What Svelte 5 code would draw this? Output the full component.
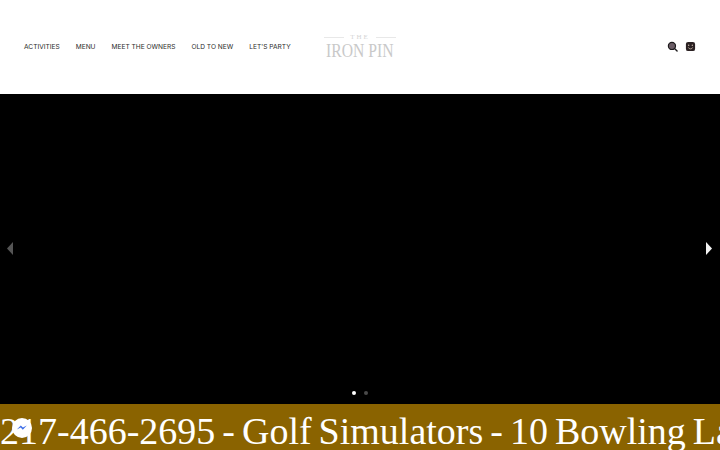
<script>
	const NAV = ['ACTIVITIES', 'MENU', 'MEET THE OWNERS', 'OLD TO NEW', "LET'S PARTY"];
</script>

<div class="page">
	<header class="head">
		<nav class="nav">
			{#each NAV as item}
				<span class="nav-link">{item}</span>
			{/each}
		</nav>

		<div class="logo">
			<div class="logo-top"><i></i><span>THE</span><i></i></div>
			<div class="logo-name">IRON PIN</div>
		</div>

		<div class="tools">
			<svg class="ico" viewBox="0 0 12 12" aria-hidden="true">
				<circle cx="5.4" cy="5.4" r="3.9" fill="#6b5d66" stroke="#1d1a1c" stroke-width="1.3"/>
				<path d="M8.2 8.2 11 11" stroke="#1d1a1c" stroke-width="1.5" stroke-linecap="round"/>
			</svg>
			<svg class="ico" viewBox="0 0 12 12" aria-hidden="true">
				<rect x="1" y="1" width="10" height="10" rx="2.4" fill="#2a2022"/>
				<circle cx="4" cy="4.6" r=".8" fill="#c9b7a8"/>
				<circle cx="8" cy="4.6" r=".8" fill="#c9b7a8"/>
				<path d="M3.6 7a2.6 2.6 0 0 0 4.8 0" fill="none" stroke="#c9b7a8" stroke-width=".9"/>
			</svg>
		</div>
	</header>

	<section class="hero">
		<svg class="arrow left" viewBox="0 0 6 13" aria-hidden="true"><path d="M6 0v13L0 6.500z"/></svg>
		<svg class="arrow right" viewBox="0 0 6 13" aria-hidden="true"><path d="M0 0v13l6-6.500z"/></svg>
		<div class="dots"><span class="dot on"></span><span class="dot"></span></div>
	</section>

	<div class="ticker">217-466-2695 - Golf Simulators - 10 Bowling La</div>

	<div class="chat">
		<svg viewBox="0 0 20 20" aria-hidden="true">
			<path d="M10 2.500c-4.300 0-7.500 3-7.500 6.900 0 2.100.9 3.900 2.400 5.100v2.400l2.300-1.300c.9.300 1.800.4 2.800.4 4.300 0 7.500-3 7.500-6.600S14.300 2.500 10 2.500z" fill="#fff"/>
			<path d="M4.800 11.600 8.800 7.400l2.100 2.100 3.900-2.100-4 4.300-2.100-2.200z" fill="#3f6fe8"/>
		</svg>
	</div>
</div>

<style>
	:global(body) {
		margin: 0;
		background: #fff;
	}
	.page {
		position: relative;
		display: flex;
		flex-direction: column;
		width: 720px;
		height: 450px;
		overflow: hidden;
	}

	/* header */
	.head {
		display: grid;
		grid-template-columns: 1fr auto 1fr;
		align-items: center;
		height: 94px;
		padding: 0 24px 1px;
		box-sizing: border-box;
		background: #fff;
	}
	.nav {
		display: flex;
		gap: 16px;
		white-space: nowrap;
	}
	.nav-link {
		font-family: "Inter", "Liberation Sans", sans-serif;
		font-size: 6.600px;
		color: #2b2b2b;
	}
	.logo {
		display: flex;
		flex-direction: column;
		align-items: center;
		color: #c9c9c9;
		font-family: "Liberation Serif", serif;
		margin-bottom: 1px;
	}
	.logo-top {
		display: flex;
		align-items: center;
		gap: 6px;
		font-size: 7px;
		line-height: 7px;
		letter-spacing: 2px;
		color: #d4d4d4;
		margin-bottom: 3px;
	}
	.logo-top i {
		display: block;
		width: 20px;
		height: 1px;
		background: #e8e8e8;
	}
	.logo-name {
		font-size: 18px;
		line-height: 15px;
		transform: scaleX(0.87);
	}
	.tools {
		display: flex;
		justify-content: flex-end;
		gap: 7px;
	}
	.ico {
		display: block;
		width: 11px;
		height: 11px;
	}

	/* slider */
	.hero {
		position: relative;
		height: 310px;
		background: #000;
	}
	.arrow {
		position: absolute;
		top: 148px;
		width: 6px;
		height: 13px;
	}
	.arrow.left {
		left: 7px;
		fill: #555;
	}
	.arrow.right {
		right: 8px;
		fill: #f2f2f2;
	}
	.dots {
		position: absolute;
		bottom: 9px;
		left: 0;
		right: 0;
		display: flex;
		justify-content: center;
		gap: 8px;
	}
	.dot {
		width: 4px;
		height: 4px;
		border-radius: 50%;
		background: #4a4a4a;
	}
	.dot.on {
		background: #fff;
	}

	/* ticker */
	.ticker {
		height: 46px;
		background: #8a6300;
		color: #fff;
		font-family: "Liberation Serif", serif;
		font-size: 38px;
		line-height: 54px;
		word-spacing: -2.500px;
		white-space: nowrap;
		overflow: hidden;
	}

	.chat {
		position: absolute;
		left: 12px;
		top: 418px;
		width: 20px;
		height: 20px;
		border-radius: 50%;
		background: #fff;
	}
	.chat svg {
		display: block;
		width: 20px;
		height: 20px;
	}
</style>
